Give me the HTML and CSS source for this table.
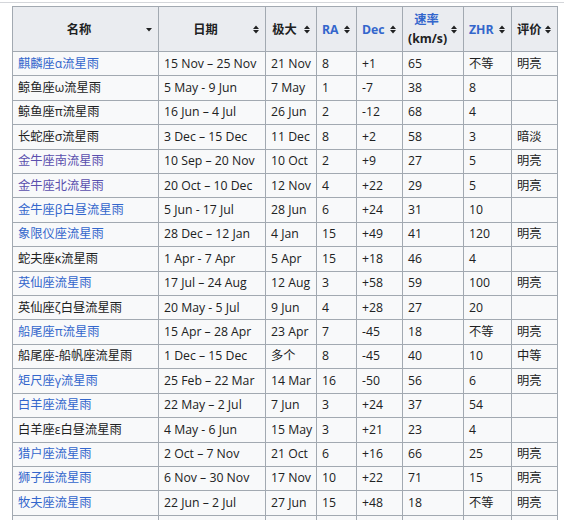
FILE: index.html
```html
<!DOCTYPE html>
<html lang="zh">
<head>
<meta charset="utf-8">
<title>流星雨列表</title>
<link rel="stylesheet" href="styles.css">
</head>
<body>
<div class="page">
<table class="wikitable">
<colgroup>
<col class="c-name"><col class="c-date"><col class="c-max"><col class="c-ra"><col class="c-dec"><col class="c-speed"><col class="c-zhr"><col class="c-rate">
</colgroup>
<thead>
<tr>
<th>名称<span class="sort"><svg width="6" height="9" viewBox="0 0 6 9"><polygon points="0,3 6,3 3,6.5"/></svg></span></th>
<th>日期<span class="sort"><svg width="6" height="9" viewBox="0 0 6 9"><polygon points="0,4 3,0.5 6,4"/><polygon points="0,5 6,5 3,8.5"/></svg></span></th>
<th>极大<span class="sort"><svg width="6" height="9" viewBox="0 0 6 9"><polygon points="0,4 3,0.5 6,4"/><polygon points="0,5 6,5 3,8.5"/></svg></span></th>
<th><a class="link">RA</a><span class="sort"><svg width="6" height="9" viewBox="0 0 6 9"><polygon points="0,4 3,0.5 6,4"/><polygon points="0,5 6,5 3,8.5"/></svg></span></th>
<th><a class="link">Dec</a><span class="sort"><svg width="6" height="9" viewBox="0 0 6 9"><polygon points="0,4 3,0.5 6,4"/><polygon points="0,5 6,5 3,8.5"/></svg></span></th>
<th><a class="link">速率</a><br>(km/s)<span class="sort"><svg width="6" height="9" viewBox="0 0 6 9"><polygon points="0,4 3,0.5 6,4"/><polygon points="0,5 6,5 3,8.5"/></svg></span></th>
<th><a class="link">ZHR</a><span class="sort"><svg width="6" height="9" viewBox="0 0 6 9"><polygon points="0,4 3,0.5 6,4"/><polygon points="0,5 6,5 3,8.5"/></svg></span></th>
<th>评价<span class="sort"><svg width="6" height="9" viewBox="0 0 6 9"><polygon points="0,4 3,0.5 6,4"/><polygon points="0,5 6,5 3,8.5"/></svg></span></th>
</tr>
</thead>
<tbody>
<tr><td><a class="link">麒麟座α流星雨</a></td><td>15 Nov – 25 Nov</td><td>21 Nov</td><td>8</td><td>+1</td><td>65</td><td>不等</td><td>明亮</td></tr>
<tr><td>鲸鱼座ω流星雨</td><td>5 May - 9 Jun</td><td>7 May</td><td>1</td><td>-7</td><td>38</td><td>8</td><td></td></tr>
<tr><td>鲸鱼座π流星雨</td><td>16 Jun – 4 Jul</td><td>26 Jun</td><td>2</td><td>-12</td><td>68</td><td>4</td><td></td></tr>
<tr><td>长蛇座σ流星雨</td><td>3 Dec – 15 Dec</td><td>11 Dec</td><td>8</td><td>+2</td><td>58</td><td>3</td><td>暗淡</td></tr>
<tr><td><a class="link visited">金牛座南流星雨</a></td><td>10 Sep – 20 Nov</td><td>10 Oct</td><td>2</td><td>+9</td><td>27</td><td>5</td><td>明亮</td></tr>
<tr><td><a class="link visited">金牛座北流星雨</a></td><td>20 Oct – 10 Dec</td><td>12 Nov</td><td>4</td><td>+22</td><td>29</td><td>5</td><td>明亮</td></tr>
<tr><td><a class="link">金牛座β白昼流星雨</a></td><td>5 Jun - 17 Jul</td><td>28 Jun</td><td>6</td><td>+24</td><td>31</td><td>10</td><td></td></tr>
<tr><td><a class="link">象限仪座流星雨</a></td><td>28 Dec – 12 Jan</td><td>4 Jan</td><td>15</td><td>+49</td><td>41</td><td>120</td><td>明亮</td></tr>
<tr><td>蛇夫座κ流星雨</td><td>1 Apr - 7 Apr</td><td>5 Apr</td><td>15</td><td>+18</td><td>46</td><td>4</td><td></td></tr>
<tr><td><a class="link">英仙座流星雨</a></td><td>17 Jul – 24 Aug</td><td>12 Aug</td><td>3</td><td>+58</td><td>59</td><td>100</td><td>明亮</td></tr>
<tr><td>英仙座ζ白昼流星雨</td><td>20 May - 5 Jul</td><td>9 Jun</td><td>4</td><td>+28</td><td>27</td><td>20</td><td></td></tr>
<tr><td><a class="link">船尾座π流星雨</a></td><td>15 Apr – 28 Apr</td><td>23 Apr</td><td>7</td><td>-45</td><td>18</td><td>不等</td><td>明亮</td></tr>
<tr><td>船尾座-船帆座流星雨</td><td>1 Dec – 15 Dec</td><td>多个</td><td>8</td><td>-45</td><td>40</td><td>10</td><td>中等</td></tr>
<tr><td><a class="link">矩尺座γ流星雨</a></td><td>25 Feb – 22 Mar</td><td>14 Mar</td><td>16</td><td>-50</td><td>56</td><td>6</td><td>明亮</td></tr>
<tr><td><a class="link">白羊座流星雨</a></td><td>22 May – 2 Jul</td><td>7 Jun</td><td>3</td><td>+24</td><td>37</td><td>54</td><td></td></tr>
<tr><td>白羊座ε白昼流星雨</td><td>4 May - 6 Jun</td><td>15 May</td><td>3</td><td>+21</td><td>23</td><td>4</td><td></td></tr>
<tr><td><a class="link">猎户座流星雨</a></td><td>2 Oct – 7 Nov</td><td>21 Oct</td><td>6</td><td>+16</td><td>66</td><td>25</td><td>明亮</td></tr>
<tr><td><a class="link">狮子座流星雨</a></td><td>6 Nov – 30 Nov</td><td>17 Nov</td><td>10</td><td>+22</td><td>71</td><td>15</td><td>明亮</td></tr>
<tr><td><a class="link">牧夫座流星雨</a></td><td>22 Jun – 2 Jul</td><td>27 Jun</td><td>15</td><td>+48</td><td>18</td><td>不等</td><td>明亮</td></tr>
<tr><td></td><td></td><td></td><td></td><td></td><td></td><td></td><td></td></tr>
</tbody>
</table>
</div>
</body>
</html>
```
FILE: styles.css
```css
html, body {
  margin: 0;
  padding: 0;
  background: #ffffff;
}

.page {
  border-top: 1px solid #d4d6da;
  margin-top: 2px;
  padding: 3px 0 0 12px;
}

.wikitable {
  border-collapse: collapse;
  table-layout: fixed;
  width: 546px;
  font-family: "Open Sans", "Noto Sans CJK SC", sans-serif;
  font-size: 12.25px;
  color: #202122;
  background: #f8f9fa;
  border: 1px solid #a2a9b1;
}

.c-name { width: 146px; }
.c-date { width: 107px; }
.c-max { width: 51px; }
.c-ra { width: 40px; }
.c-dec { width: 46px; }
.c-speed { width: 61px; }
.c-zhr { width: 48px; }
.c-rate { width: 46px; }

.wikitable th,
.wikitable td {
  border: 1px solid #a2a9b1;
  font-family: "Open Sans", "Noto Sans CJK SC", sans-serif;
}

.wikitable th {
  position: relative;
  background: #eaecf0;
  font-weight: bold;
  text-align: center;
  vertical-align: middle;
  line-height: 19px;
  padding: 2px 18px 2px 5px;
  height: 40px;
  white-space: nowrap;
}

.wikitable td {
  line-height: 18.4px;
  padding: 2.5px 5px;
  height: 18.4px;
  text-align: left;
  white-space: nowrap;
  overflow: hidden;
}

.link {
  color: #3366cc;
  text-decoration: none;
}

.link.visited {
  color: #5a4fae;
}

.sort {
  position: absolute;
  right: 6px;
  top: 50%;
  width: 6px;
  height: 9px;
  margin-top: -4.5px;
  line-height: 0;
}

.sort svg {
  fill: #202122;
  display: block;
}
```
